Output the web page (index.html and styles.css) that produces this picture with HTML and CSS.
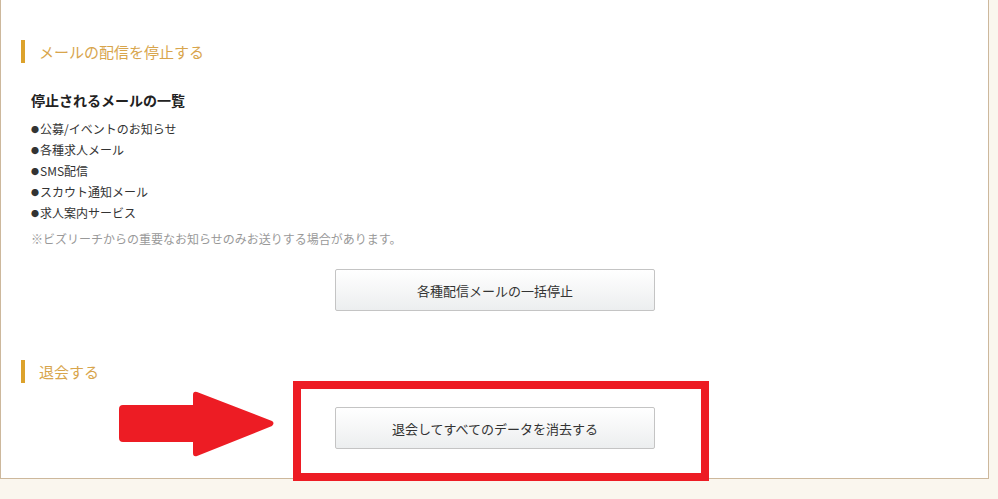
FILE: index.html
```html
<!DOCTYPE html>
<html lang="ja">
<head>
<meta charset="utf-8">
<link rel="stylesheet" href="styles.css">
</head>
<body>
<div class="card">
  <section class="sec">
    <h2 class="sec-title">メールの配信を停止する</h2>
    <div class="sec-body">
      <h3 class="sub">停止されるメールの一覧</h3>
      <ul class="list">
        <li><span class="dot">●</span>公募/イベントのお知らせ</li>
        <li><span class="dot">●</span>各種求人メール</li>
        <li><span class="dot">●</span>SMS配信</li>
        <li><span class="dot">●</span>スカウト通知メール</li>
        <li><span class="dot">●</span>求人案内サービス</li>
      </ul>
      <p class="note">※ビズリーチからの重要なお知らせのみお送りする場合があります。</p>
    </div>
    <div class="btn-row first">
      <button class="btn">各種配信メールの一括停止</button>
    </div>
  </section>
  <section class="sec second">
    <h2 class="sec-title">退会する</h2>
    <div class="btn-row last">
      <button class="btn">退会してすべてのデータを消去する</button>
    </div>
  </section>
  <svg class="arrow" width="160" height="70" viewBox="0 0 160 70">
    <path d="M4 14 H74 V4 Q74 0 78 1 L153 30 Q156 32 153 35 L78 65 Q74 66 74 62 V51 H4 Q0 51 0 47 V18 Q0 14 4 14 Z" fill="#ed1c24"/>
  </svg>
  <div class="highlight"></div>
</div>
</body>
</html>
```

FILE: styles.css
```css
html, body {
  margin: 0;
  padding: 0;
}
body {
  background: #faf6ee;
  font-family: "Noto Sans CJK JP", "Noto Sans", sans-serif;
  color: #333;
  height: 499px;
  overflow: hidden;
}
.card {
  position: relative;
  width: 987px;
  background: #fff;
  border: 1px solid #cdb89c;
  border-top: none;
  padding: 40px 0 29px;
}
.sec-title {
  margin: 0 0 0 20px;
  border-left: 4px solid #dca22c;
  padding-left: 14px;
  height: 23px;
  line-height: 23px;
  font-size: 15px;
  font-weight: normal;
  color: #d8a54c;
}
.sec-body {
  padding-left: 30px;
}
.sub {
  margin: 27px 0 0;
  font-size: 14px;
  line-height: 20px;
  font-weight: bold;
  color: #222;
}
.list {
  list-style: none;
  margin: 8px 0 0;
  padding: 0;
  font-size: 12px;
  line-height: 21px;
  color: #333;
}
.list li {
  height: 21px;
}
.dot {
  font-size: 8px;
  line-height: 0;
  vertical-align: 1px;
  margin-right: 1px;
}
.note {
  margin: 5px 0 0;
  font-size: 12px;
  line-height: 21px;
  color: #999;
}
.btn-row {
  display: flex;
  justify-content: center;
  padding-left: 1px;
}
.btn-row.first {
  margin-top: 20px;
}
.btn-row.last {
  margin-top: 24px;
}
.second {
  margin-top: 49px;
}
.btn {
  width: 320px;
  height: 42px;
  border: 1px solid #c4c4c4;
  border-radius: 2px;
  background: linear-gradient(#ffffff, #eceeef);
  font-family: "Noto Sans CJK JP", "Noto Sans", sans-serif;
  font-size: 13px;
  color: #333;
  padding: 0;
}
.arrow {
  position: absolute;
  left: 118px;
  top: 391px;
}
.highlight {
  position: absolute;
  left: 292px;
  top: 381px;
  width: 400px;
  height: 84px;
  border: 8px solid #ed1c24;
}
```
